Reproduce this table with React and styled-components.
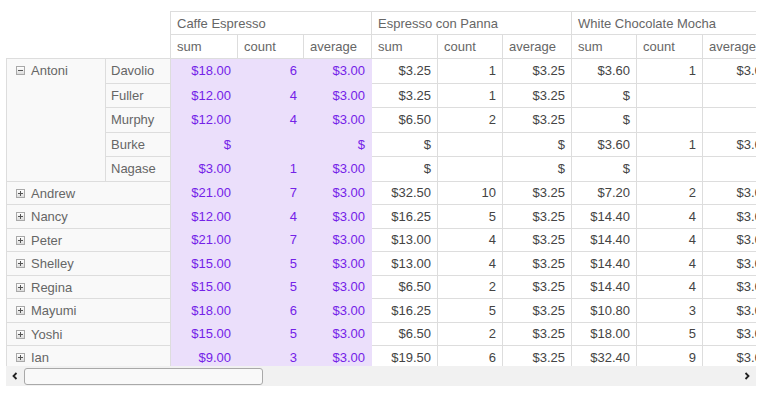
import styled, { createGlobalStyle } from "styled-components";

const GlobalStyle = createGlobalStyle`
    body {
        margin: 0;
        background: #fff;
        font-family: "Liberation Sans", Arial, sans-serif;
    }
`;

const GROUPS = ["Caffe Espresso", "Espresso con Panna", "White Chocolate Mocha"];
const MEASURES = ["sum", "count", "average"];

const NAGASE_GROUP = [
    { name: "Davolio", values: [["$18.00", "6", "$3.00"], ["$3.25", "1", "$3.25"], ["$3.60", "1", "$3.60"]] },
    { name: "Fuller", values: [["$12.00", "4", "$3.00"], ["$3.25", "1", "$3.25"], ["$", "", "$"]] },
    { name: "Murphy", values: [["$12.00", "4", "$3.00"], ["$6.50", "2", "$3.25"], ["$", "", "$"]] },
    { name: "Burke", values: [["$", "", "$"], ["$", "", "$"], ["$3.60", "1", "$3.60"]] },
    { name: "Nagase", values: [["$3.00", "1", "$3.00"], ["$", "", "$"], ["$", "", "$"]] },
];

const COLLAPSED = [
    { name: "Andrew", values: [["$21.00", "7", "$3.00"], ["$32.50", "10", "$3.25"], ["$7.20", "2", "$3.60"]] },
    { name: "Nancy", values: [["$12.00", "4", "$3.00"], ["$16.25", "5", "$3.25"], ["$14.40", "4", "$3.60"]] },
    { name: "Peter", values: [["$21.00", "7", "$3.00"], ["$13.00", "4", "$3.25"], ["$14.40", "4", "$3.60"]] },
    { name: "Shelley", values: [["$15.00", "5", "$3.00"], ["$13.00", "4", "$3.25"], ["$14.40", "4", "$3.60"]] },
    { name: "Regina", values: [["$15.00", "5", "$3.00"], ["$6.50", "2", "$3.25"], ["$14.40", "4", "$3.60"]] },
    { name: "Mayumi", values: [["$18.00", "6", "$3.00"], ["$16.25", "5", "$3.25"], ["$10.80", "3", "$3.60"]] },
    { name: "Yoshi", values: [["$15.00", "5", "$3.00"], ["$6.50", "2", "$3.25"], ["$18.00", "5", "$3.60"]] },
    { name: "Ian", values: [["$9.00", "3", "$3.00"], ["$19.50", "6", "$3.25"], ["$32.40", "9", "$3.60"]] },
];

const BORDER = "#dddddd";
const HIGHLIGHT_BG = "#ebdffb";

const Page = styled.div`
    padding: 11px 0 0 6px;
`;

const Pivot = styled.div`
    width: 750px;
`;

const Viewport = styled.div`
    height: 355px;
    overflow: hidden;
`;

const Grid = styled.div`
    display: grid;
    width: 770px;
    grid-template-columns: 100px 65px 67px 66px 68px 66px 65px 69px 65px 66px 73px;
    grid-template-rows: 24px 24px repeat(5, 24.5px) repeat(8, 23.5px);
    font-size: 13px;
`;

const Corner = styled.div`
    grid-row: 1 / 3;
    grid-column: 1 / 3;
    border-right: 1px solid ${BORDER};
    border-bottom: 1px solid ${BORDER};
`;

const HeadCell = styled.div`
    grid-column: span ${({ $span }) => $span || 1};
    display: flex;
    align-items: center;
    padding: 0 6px;
    color: #666;
    white-space: nowrap;
    overflow: hidden;
    border-right: 1px solid ${BORDER};
    border-bottom: 1px solid ${BORDER};
    border-top: ${({ $top }) => ($top ? `1px solid ${BORDER}` : "none")};
`;

const RowHead = styled.div`
    grid-row: span ${({ $rows }) => $rows || 1};
    grid-column: span ${({ $cols }) => $cols || 1};
    display: flex;
    align-items: flex-start;
    gap: 6px;
    padding: 0 6px 0 ${({ $toggle }) => ($toggle ? "9px" : "5px")};
    line-height: 23px;
    color: #666;
    background: #f9f9f9;
    white-space: nowrap;
    border-right: 1px solid ${BORDER};
    border-bottom: 1px solid ${BORDER};
    border-left: ${({ $edge }) => ($edge ? `1px solid ${BORDER}` : "none")};
`;

const Toggle = styled.span`
    position: relative;
    flex: none;
    width: 9px;
    height: 9px;
    margin-top: 7px;
    box-sizing: border-box;
    border: 1px solid #a8a8a8;
    background: linear-gradient(#ffffff, #dcdcdc);

    &::before {
        content: "";
        position: absolute;
        left: 1px;
        top: 3px;
        width: 5px;
        height: 1px;
        background: #555;
    }

    &::after {
        content: "";
        display: ${({ $open }) => ($open ? "none" : "block")};
        position: absolute;
        left: 3px;
        top: 1px;
        width: 1px;
        height: 5px;
        background: #555;
    }
`;

const DataCell = styled.div`
    display: flex;
    align-items: center;
    justify-content: flex-end;
    padding: 0 6px;
    white-space: nowrap;
    color: ${({ $hot }) => ($hot ? "#7422e8" : "#444")};
    background: ${({ $hot }) => ($hot ? HIGHLIGHT_BG : "#fff")};
    border-right: 1px solid ${({ $hot }) => ($hot ? HIGHLIGHT_BG : BORDER)};
    border-bottom: 1px solid ${({ $hot }) => ($hot ? HIGHLIGHT_BG : BORDER)};
`;

const Scrollbar = styled.div`
    display: flex;
    align-items: center;
    height: 20px;
    background: #f1f1f1;
`;

const Arrow = styled.div`
    display: flex;
    align-items: center;
    justify-content: center;
    width: 18px;
    height: 20px;
    flex: none;
`;

const Track = styled.div`
    flex: 1;
    display: flex;
    align-items: center;
    height: 100%;
`;

const Thumb = styled.div`
    width: 239px;
    height: 17px;
    box-sizing: border-box;
    border: 1px solid #a9a9a9;
    border-radius: 3px;
    background: #f9f9f9;
`;

const Chevron = ({ dir }) => (
    <svg width="6" height="8" viewBox="0 0 6 8">
        <polyline
            points={dir === "left" ? "4.5,1 1.5,4 4.5,7" : "1.5,1 4.5,4 1.5,7"}
            fill="none"
            stroke="#222"
            strokeWidth="1.8"
        />
    </svg>
);

const DataCells = ({ values }) =>
    values.flatMap((group, g) =>
        group.map((value, m) => (
            <DataCell key={`${g}-${m}`} $hot={g === 0}>
                {value}
            </DataCell>
        ))
    );

const App = () => {
    return (
        <>
            <GlobalStyle />
            <Page>
                <Pivot>
                    <Viewport>
                        <Grid>
                            <Corner />
                            {GROUPS.map((g) => (
                                <HeadCell key={g} $span={3} $top>
                                    {g}
                                </HeadCell>
                            ))}
                            {GROUPS.flatMap((g) =>
                                MEASURES.map((m) => <HeadCell key={g + m}>{m}</HeadCell>)
                            )}

                            <RowHead $rows={5} $edge $toggle>
                                <Toggle $open />
                                Antoni
                            </RowHead>
                            {NAGASE_GROUP.map((row) => [
                                <RowHead key={row.name}>{row.name}</RowHead>,
                                <DataCells key={row.name + "-d"} values={row.values} />,
                            ])}

                            {COLLAPSED.map((row) => [
                                <RowHead key={row.name} $cols={2} $edge $toggle>
                                    <Toggle />
                                    {row.name}
                                </RowHead>,
                                <DataCells key={row.name + "-d"} values={row.values} />,
                            ])}
                        </Grid>
                    </Viewport>
                    <Scrollbar>
                        <Arrow>
                            <Chevron dir="left" />
                        </Arrow>
                        <Track>
                            <Thumb />
                        </Track>
                        <Arrow>
                            <Chevron dir="right" />
                        </Arrow>
                    </Scrollbar>
                </Pivot>
            </Page>
        </>
    );
};

export default App;
